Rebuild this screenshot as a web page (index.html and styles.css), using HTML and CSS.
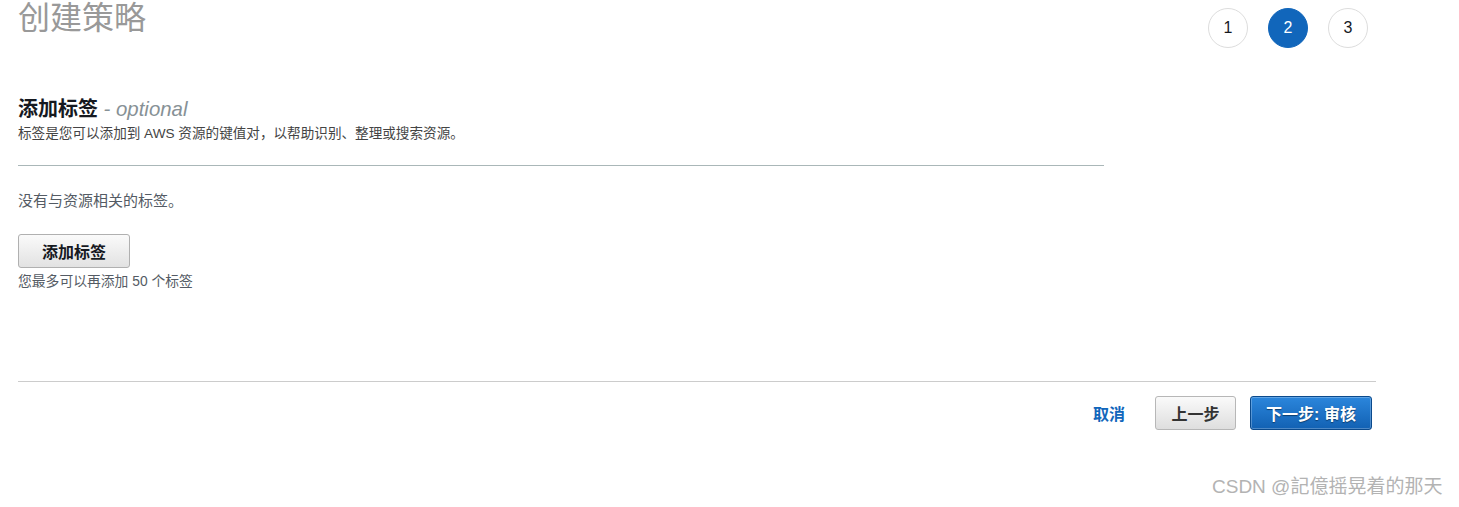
FILE: index.html
```html
<!DOCTYPE html>
<html lang="zh-CN">
<head>
<meta charset="utf-8">
<title>创建策略</title>
<link rel="stylesheet" href="styles.css">
</head>
<body>
<div class="page">
  <div class="header">
    <h1 class="title">创建策略</h1>
    <ol class="steps">
      <li class="step">1</li>
      <li class="step active">2</li>
      <li class="step">3</li>
    </ol>
  </div>

  <section class="content">
    <h2 class="heading">添加标签 <span class="optional">- optional</span></h2>
    <p class="desc">标签是您可以添加到 AWS 资源的键值对，以帮助识别、整理或搜索资源。</p>
    <hr class="divider">
    <p class="empty">没有与资源相关的标签。</p>
    <button class="btn btn-add" type="button">添加标签</button>
    <p class="hint">您最多可以再添加 50 个标签</p>
  </section>

  <footer class="footer">
    <a class="cancel" href="#">取消</a>
    <button class="btn btn-prev" type="button">上一步</button>
    <button class="btn btn-next" type="button">下一步: 审核</button>
  </footer>
</div>
<div class="watermark">CSDN @記億摇晃着的那天</div>
</body>
</html>
```

FILE: styles.css
```css
html, body {
  margin: 0;
  padding: 0;
  background: #ffffff;
}

body {
  font-family: "Liberation Sans", "Noto Sans CJK SC", sans-serif;
  color: #16191f;
  position: relative;
  height: 507px;
  overflow: hidden;
}

.page {
  padding-left: 18px;
  width: 1358px;
}

.header {
  display: flex;
  justify-content: space-between;
  align-items: flex-start;
  width: 1350px;
}

.title {
  margin: 0;
  font-size: 32px;
  line-height: 36px;
  font-weight: normal;
  color: #999999;
}

.steps {
  display: flex;
  gap: 20px;
  list-style: none;
  margin: 0;
  padding: 8px 0 0 0;
}

.step {
  width: 38px;
  height: 38px;
  border: 1px solid #dddddd;
  border-radius: 50%;
  display: flex;
  align-items: center;
  justify-content: center;
  font-size: 16px;
  color: #16191f;
}

.step.active {
  background: #1166bb;
  border-color: #1166bb;
  color: #ffffff;
}

.content {
  width: 1086px;
  margin-top: 49px;
}

.heading {
  margin: 0;
  font-size: 20px;
  line-height: 24px;
  font-weight: bold;
  color: #16191f;
}

.optional {
  font-weight: normal;
  font-style: italic;
  color: #879196;
  font-size: 20.4px;
}

.desc {
  margin: 4px 0 0 0;
  font-size: 13.6px;
  line-height: 18px;
  color: #444444;
}

.divider {
  margin: 22px 0 0 0;
  border: 0;
  border-top: 1px solid #aab7b8;
  height: 0;
}

.empty {
  margin: 25px 0 0 0;
  font-size: 15px;
  line-height: 20px;
  color: #545b64;
}

.btn {
  font-family: "Liberation Sans", "Noto Sans CJK SC", sans-serif;
  font-weight: bold;
  font-size: 16px;
  border-radius: 3px;
  cursor: pointer;
  padding: 0;
  height: 34px;
}

.btn-add {
  margin-top: 23px;
  width: 112px;
  color: #16191f;
  border: 1px solid #b0b0b0;
  background: linear-gradient(#fafafa, #e2e2e2);
}

.hint {
  margin: 5px 0 0 0;
  font-size: 13.8px;
  line-height: 18px;
  color: #545b64;
}

.footer {
  margin-top: 90px;
  border-top: 1px solid #cccccc;
  padding-top: 14px;
  display: flex;
  justify-content: flex-end;
  align-items: center;
  width: 1358px;
  box-sizing: border-box;
  padding-right: 4px;
}

.cancel {
  color: #1166bb;
  font-weight: bold;
  font-size: 16px;
  text-decoration: none;
  margin-right: 30px;
}

.btn-prev {
  width: 81px;
  color: #333333;
  border: 1px solid #b7b7b7;
  background: linear-gradient(#fafafa, #dedede);
  margin-right: 14px;
}

.btn-next {
  width: 122px;
  color: #ffffff;
  border: 1px solid #0b4a8c;
  background: linear-gradient(#2b86dc, #1261b3);
  text-shadow: 0 1px 1px #0a3d70;
  box-shadow: inset 0 0 0 1px rgba(255, 255, 255, 0.25);
}

.watermark {
  position: absolute;
  left: 1212px;
  top: 475px;
  font-size: 19px;
  line-height: 24px;
  color: #b3b3b3;
  white-space: nowrap;
}
```
